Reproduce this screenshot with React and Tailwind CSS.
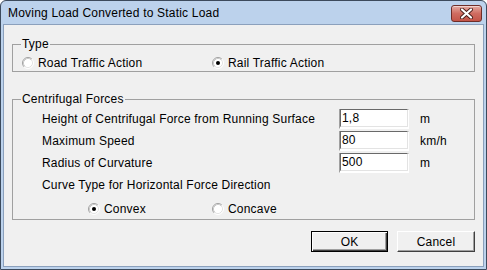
import React from "react";

function Radio({ checked }) {
  return (
    <svg width="12" height="12" viewBox="0 0 12 12" className="shrink-0">
      <circle cx="6" cy="6" r="5" fill="#ffffff" />
      <path d="M2.11 9.89 A5.5 5.5 0 0 1 9.89 2.11" fill="none" stroke="#a0a0a0" strokeWidth="1" />
      <path d="M9.89 2.11 A5.5 5.5 0 0 1 2.11 9.89" fill="none" stroke="#ffffff" strokeWidth="1" />
      <path d="M2.82 9.18 A4.5 4.5 0 0 1 9.18 2.82" fill="none" stroke="#c8c8c8" strokeWidth="1" />
      <path d="M9.18 2.82 A4.5 4.5 0 0 1 2.82 9.18" fill="none" stroke="#e3e3e3" strokeWidth="1" />
      {checked && <circle cx="6" cy="6" r="2" fill="#000000" />}
    </svg>
  );
}

function RadioItem({ checked, label, className }) {
  return (
    <div className={"flex items-center gap-[4px] h-[14px] " + (className || "")}>
      <Radio checked={checked} />
      <span className="leading-[14px]">{label}</span>
    </div>
  );
}

function Field({ label, value, unit }) {
  return (
    <div className="flex items-center h-[22px]">
      <span className="w-[297px] leading-[14px]">{label}</span>
      <div className="w-[70px] h-[20px] bg-white border border-t-[#a0a0a0] border-l-[#a0a0a0] border-r-white border-b-white">
        <div className="w-full h-full border border-t-[#696969] border-l-[#696969] border-r-[#e3e3e3] border-b-[#e3e3e3] pl-[1px] leading-[16px] mt-[-1px]">
          {value}
        </div>
      </div>
      <span className="ml-[11px] leading-[14px]">{unit}</span>
    </div>
  );
}

export default function App() {
  return (
    <div className="w-[487px] h-[270px] bg-[#bcd2ec] border border-[#3c4a5c] rounded-t-[6px] flex flex-col font-['Liberation_Sans',Arial,sans-serif] text-[12px] tracking-[0.2px] text-black overflow-hidden">
      <div className="h-[23px] shrink-0 flex items-center justify-between pl-[7px] pr-[4px]">
        <span className="leading-[14px] mt-[1px]">Moving Load Converted to Static Load</span>
        <div className="w-[31px] h-[17px] mt-[2px] rounded-[3px] border border-[#6e2d28] bg-gradient-to-b from-[#e3aaa2] via-[#cf6c61] to-[#c45448] flex items-center justify-center shadow-[inset_0_1px_0_rgba(255,255,255,0.5)]">
          <svg width="13" height="11" viewBox="0 0 13 11">
            <path d="M2 1.5 L11 9.5 M11 1.5 L2 9.5" stroke="#4a1f1b" strokeWidth="4" strokeLinecap="round" />
            <path d="M2 1.5 L11 9.5 M11 1.5 L2 9.5" stroke="#ffffff" strokeWidth="2.2" strokeLinecap="round" />
          </svg>
        </div>
      </div>
      <div className="flex-1 mx-[2px] mb-[2px] bg-[#f0f0f0] border border-[#8ba0bc] flex flex-col">
        <fieldset className="mt-[12px] mx-[8px] border border-[#a0a0a0] p-0">
          <legend className="ml-[8px] px-[1px] leading-[14px]">Type</legend>
          <div className="flex pl-[9px] pt-[5px] pb-[1px]">
            <RadioItem checked={false} label="Road Traffic Action" className="w-[190px]" />
            <RadioItem checked={true} label="Rail Traffic Action" />
          </div>
        </fieldset>
        <fieldset className="mt-[20px] mx-[8px] border border-[#a0a0a0] p-0">
          <legend className="ml-[8px] px-[1px] leading-[14px]">Centrifugal Forces</legend>
          <div className="flex flex-col pl-[29px] pt-[2px] pb-[3px]">
            <Field label="Height of Centrifugal Force from Running Surface" value="1,8" unit="m" />
            <Field label="Maximum Speed" value="80" unit="km/h" />
            <Field label="Radius of Curvature" value="500" unit="m" />
            <div className="h-[22px] flex items-center leading-[14px]">Curve Type for Horizontal Force Direction</div>
            <div className="flex mt-[6px] pl-[46px]">
              <RadioItem checked={true} label="Convex" className="w-[124px]" />
              <RadioItem checked={false} label="Concave" />
            </div>
          </div>
        </fieldset>
        <div className="flex justify-end gap-[9px] mt-[11px] mr-[8px]">
          <button className="w-[77px] h-[21px] bg-[#f0f0f0] border border-black shadow-[inset_1px_1px_0_#ffffff,inset_-1px_-1px_0_#404040,inset_-2px_-2px_0_#a0a0a0] leading-[14px] p-0">
            OK
          </button>
          <button className="w-[78px] h-[21px] bg-[#f0f0f0] border border-t-white border-l-white border-r-[#404040] border-b-[#404040] shadow-[inset_-1px_-1px_0_#a0a0a0] leading-[14px] p-0">
            Cancel
          </button>
        </div>
      </div>
    </div>
  );
}
